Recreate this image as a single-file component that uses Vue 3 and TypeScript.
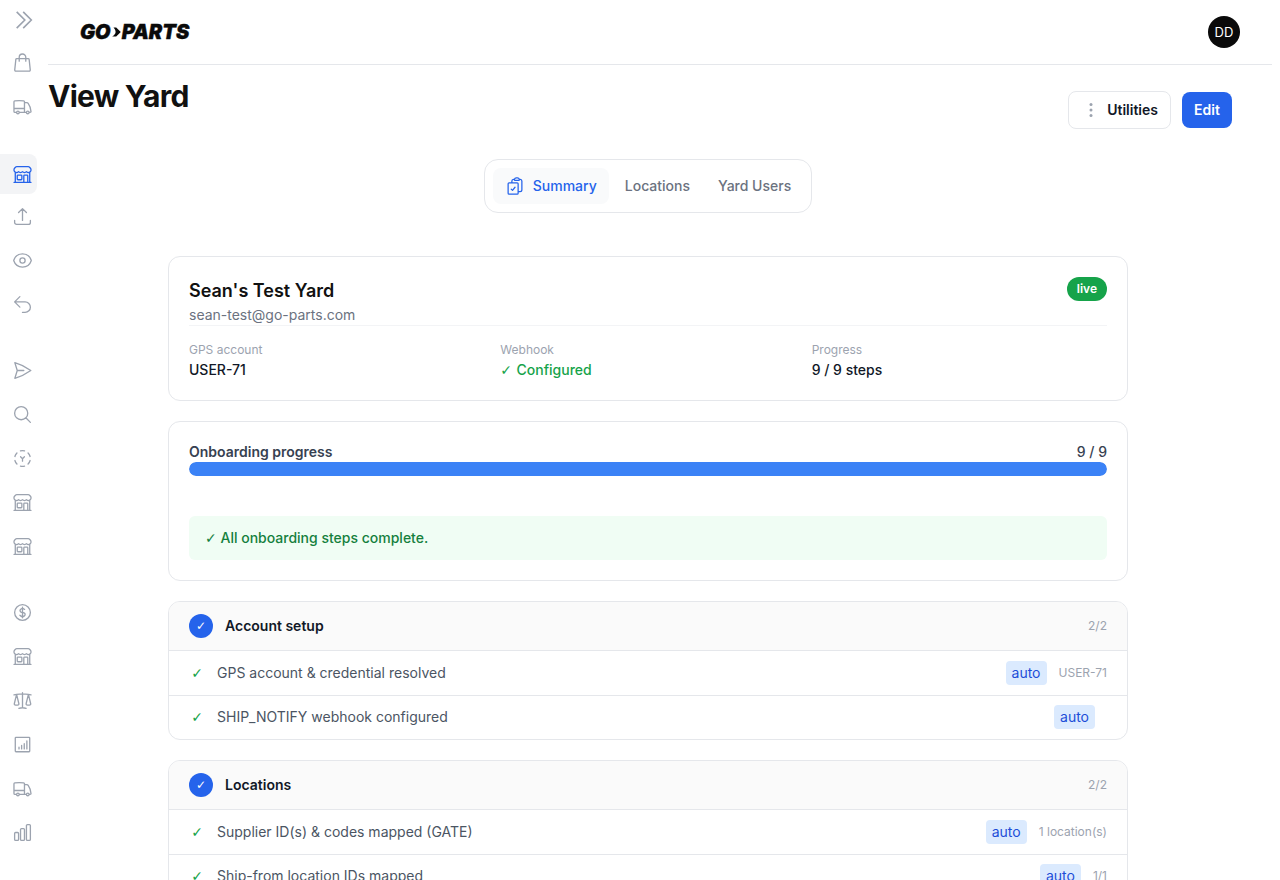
<script setup lang="ts">
type NavItem = { id: string; d: string; gap?: boolean; active?: boolean }
type Step = { label: string; tag: string; meta: string }
type Section = { title: string; count: string; steps: Step[] }

const store =
  'M13.5 21v-7.5a.75.75 0 0 1 .75-.75h3a.75.75 0 0 1 .75.75V21m-4.5 0H2.36m11.14 0H18m0 0h3.64m-1.39 0V9.349M3.75 21V9.349m0 0a3.001 3.001 0 0 0 3.75-.615A2.993 2.993 0 0 0 9.75 9.75c.896 0 1.7-.393 2.25-1.016a2.993 2.993 0 0 0 2.25 1.016c.896 0 1.7-.393 2.25-1.016a3.001 3.001 0 0 0 3.75.614m-16.5 0a3.004 3.004 0 0 1-.621-4.72l1.189-1.19A1.5 1.5 0 0 1 5.378 3h13.243a1.5 1.5 0 0 1 1.06.44l1.19 1.189a3 3 0 0 1-.621 4.72M6.75 18h3.75a.75.75 0 0 0 .75-.75V13.5a.75.75 0 0 0-.75-.75H6.75a.75.75 0 0 0-.75.75v3.75c0 .414.336.75.75.75Z'
const truck =
  'M8.25 18.75a1.5 1.5 0 0 1-3 0m3 0a1.5 1.5 0 0 0-3 0m3 0h6m-9 0H3.375a1.125 1.125 0 0 1-1.125-1.125V14.25m17.25 4.5a1.5 1.5 0 0 1-3 0m3 0a1.5 1.5 0 0 0-3 0m3 0h1.125c.621 0 1.129-.504 1.09-1.124a17.902 17.902 0 0 0-3.213-9.193 2.056 2.056 0 0 0-1.58-.86H14.25M16.5 18.75h-2.25m0-11.177v-.958c0-.568-.422-1.048-.987-1.106a48.554 48.554 0 0 0-10.026 0 1.106 1.106 0 0 0-.987 1.106v7.635m12-6.677v6.677m0 4.5v-4.5m0 0h-12'

const navItems: NavItem[] = [
  { id: 'bag', d: 'M15.75 10.5V6a3.75 3.75 0 1 0-7.5 0v4.5m11.356-1.993 1.263 12c.07.665-.45 1.243-1.119 1.243H4.25a1.125 1.125 0 0 1-1.12-1.243l1.264-12A1.125 1.125 0 0 1 5.513 7.5h12.974c.576 0 1.059.435 1.119 1.007Z' },
  { id: 'truck', d: truck },
  { id: 'yards', d: store, gap: true, active: true },
  { id: 'upload', d: 'M3 16.5v2.25A2.25 2.25 0 0 0 5.25 21h13.5A2.25 2.25 0 0 0 21 18.75V16.5m-13.5-9L12 3m0 0 4.5 4.5M12 3v13.5' },
  { id: 'eye', d: 'M2.036 12.322a1.012 1.012 0 0 1 0-.639C3.423 7.51 7.36 4.5 12 4.5c4.638 0 8.573 3.007 9.963 7.178.07.207.07.431 0 .639C20.577 16.49 16.64 19.5 12 19.5c-4.638 0-8.573-3.007-9.963-7.178ZM15 12a3 3 0 1 1-6 0 3 3 0 0 1 6 0Z' },
  { id: 'return', d: 'M9 15 3 9m0 0 6-6M3 9h12a6 6 0 0 1 0 12h-3' },
  { id: 'send', d: 'M6 12 3.269 3.125A59.769 59.769 0 0 1 21.485 12 59.768 59.768 0 0 1 3.27 20.875L5.999 12Zm0 0h7.5', gap: true },
  { id: 'search', d: 'm21 21-5.197-5.197m0 0A7.5 7.5 0 1 0 5.196 5.196a7.5 7.5 0 0 0 10.607 10.607Z' },
  { id: 'scan', d: 'M9.67 3.31A9 9 0 0 1 14.33 3.31M18.36 5.64A9 9 0 0 1 20.69 9.67M20.69 14.33A9 9 0 0 1 18.36 18.36M14.33 20.69A9 9 0 0 1 9.67 20.69M5.64 18.36A9 9 0 0 1 3.31 14.33M3.31 9.67A9 9 0 0 1 5.64 5.64M9.8 10l2.2 2.2 2.2-2.2M12 12.2V15' },
  { id: 'store2', d: store },
  { id: 'store3', d: store },
  { id: 'money', d: 'M12 6v12m-3-2.818.879.659c1.171.879 3.07.879 4.242 0 1.172-.879 1.172-2.303 0-3.182C13.536 12.219 12.768 12 12 12c-.725 0-1.45-.22-2.003-.659-1.106-.879-1.106-2.303 0-3.182s2.9-.879 4.006 0l.415.33M21 12a9 9 0 1 1-18 0 9 9 0 0 1 18 0Z', gap: true },
  { id: 'store4', d: store },
  { id: 'scale', d: 'M12 3v17.25m0 0c-1.472 0-2.882.265-4.185.75M12 20.25c1.472 0 2.882.265 4.185.75M18.75 4.97A48.416 48.416 0 0 0 12 4.5c-2.291 0-4.545.16-6.75.47m13.5 0c1.01.143 2.01.317 3 .52m-3-.52 2.62 10.726c.122.499-.106 1.028-.589 1.202a5.988 5.988 0 0 1-2.031.352 5.988 5.988 0 0 1-2.031-.352c-.483-.174-.711-.703-.59-1.202L18.75 4.971Zm-16.5.52c.99-.203 1.99-.377 3-.52m0 0 2.62 10.726c.122.499-.106 1.028-.589 1.202a5.989 5.989 0 0 1-2.031.352 5.989 5.989 0 0 1-2.031-.352c-.483-.174-.711-.703-.59-1.202L5.25 4.971Z' },
  { id: 'report', d: 'M3.75 4.5a.75.75 0 0 1 .75-.75h15a.75.75 0 0 1 .75.75v15a.75.75 0 0 1-.75.75h-15a.75.75 0 0 1-.75-.75ZM8 17v-2M11 17v-4M14 17v-6M17 17V8' },
  { id: 'truck2', d: truck },
  { id: 'chart', d: 'M3 13.125C3 12.504 3.504 12 4.125 12h2.25c.621 0 1.125.504 1.125 1.125v6.75C7.5 20.496 6.996 21 6.375 21h-2.25A1.125 1.125 0 0 1 3 19.875v-6.75ZM9.75 8.625c0-.621.504-1.125 1.125-1.125h2.25c.621 0 1.125.504 1.125 1.125v11.25c0 .621-.504 1.125-1.125 1.125h-2.25a1.125 1.125 0 0 1-1.125-1.125V8.625ZM16.5 4.125c0-.621.504-1.125 1.125-1.125h2.25C20.496 3 21 3.504 21 4.125v15.75c0 .621-.504 1.125-1.125 1.125h-2.25a1.125 1.125 0 0 1-1.125-1.125V4.125Z' },
]

const summaryIcon =
  'M11.35 3.836c-.065.21-.1.433-.1.664 0 .414.336.75.75.75h4.5a.75.75 0 0 0 .75-.75 2.25 2.25 0 0 0-.1-.664m-5.8 0A2.251 2.251 0 0 1 13.5 2.25H15c1.012 0 1.867.668 2.15 1.586m-5.8 0c-.376.023-.75.05-1.124.08C9.095 4.01 8.25 4.973 8.25 6.108V8.25m8.9-4.414c.376.023.75.05 1.124.08 1.131.094 1.976 1.057 1.976 2.192V16.5A2.25 2.25 0 0 1 18 18.75h-2.25m-7.5-10.5H4.875c-.621 0-1.125.504-1.125 1.125v11.25c0 .621.504 1.125 1.125 1.125h9.75c.621 0 1.125-.504 1.125-1.125V18.75m-7.5-10.5h6.375c.621 0 1.125.504 1.125 1.125v9.375m-8.25-3 1.5 1.5 3-3.75'

const details = [
  { label: 'GPS account', value: 'USER-71', ok: false },
  { label: 'Webhook', value: 'Configured', ok: true },
  { label: 'Progress', value: '9 / 9 steps', ok: false },
]

const sections: Section[] = [
  {
    title: 'Account setup',
    count: '2/2',
    steps: [
      { label: 'GPS account & credential resolved', tag: 'auto', meta: 'USER-71' },
      { label: 'SHIP_NOTIFY webhook configured', tag: 'auto', meta: '' },
    ],
  },
  {
    title: 'Locations',
    count: '2/2',
    steps: [
      { label: 'Supplier ID(s) & codes mapped (GATE)', tag: 'auto', meta: '1 location(s)' },
      { label: 'Ship-from location IDs mapped', tag: 'auto', meta: '1/1' },
    ],
  },
]
</script>

<template>
  <div class="shell">
    <nav class="rail">
      <button class="rail-toggle" type="button" aria-label="Expand">
        <svg class="toggle-icon" viewBox="0 0 24 24"><path d="m5.25 4.5 7.5 7.5-7.5 7.5m6-15 7.5 7.5-7.5 7.5" /></svg>
      </button>
      <a
        v-for="item in navItems"
        :key="item.id"
        class="rail-item"
        :class="{ 'rail-gap': item.gap, active: item.active }"
      >
        <svg viewBox="0 0 24 24"><path :d="item.d" /></svg>
      </a>
    </nav>

    <main class="main">
      <header class="topbar">
        <div class="logo">
          <span>GO</span>
          <svg viewBox="0 0 10 12"><path d="M2.5 1.5H5.2L9.8 6 5.2 10.5H1.2C3.4 9 4.6 7.5 4.6 6S4 3 2.5 1.5Z" /></svg>
          <span>PARTS</span>
        </div>
        <div class="avatar">DD</div>
      </header>

      <div class="page">
        <div class="page-head">
          <h1>View Yard</h1>
          <div class="actions">
            <button class="btn-utilities" type="button">
              <svg viewBox="0 0 4 16"><circle cx="2" cy="2.5" r="1.5" /><circle cx="2" cy="8" r="1.5" /><circle cx="2" cy="13.5" r="1.5" /></svg>
              Utilities
            </button>
            <button class="btn-edit" type="button">Edit</button>
          </div>
        </div>

        <div class="tabs-wrap">
          <div class="tabs">
            <button class="tab tab-active" type="button">
              <svg viewBox="0 0 24 24"><path :d="summaryIcon" /></svg>
              Summary
            </button>
            <button class="tab" type="button">Locations</button>
            <button class="tab" type="button">Yard Users</button>
          </div>
        </div>

        <div class="content">
          <section class="card">
            <div class="yard-head">
              <div>
                <h2>Sean's Test Yard</h2>
                <div class="email">sean-test@go-parts.com</div>
              </div>
              <span class="badge">live</span>
            </div>
            <div class="details">
              <div v-for="d in details" :key="d.label">
                <div class="detail-label">{{ d.label }}</div>
                <div class="detail-value" :class="{ ok: d.ok }"><span v-if="d.ok" class="tick">✓ </span>{{ d.value }}</div>
              </div>
            </div>
          </section>

          <section class="card">
            <div class="progress-head">
              <span class="progress-title">Onboarding progress</span>
              <span>9 / 9</span>
            </div>
            <div class="bar"><div class="bar-fill" :style="{ width: '100%' }"></div></div>
            <div class="complete"><span class="tick">✓</span> All onboarding steps complete.</div>
          </section>

          <section v-for="s in sections" :key="s.title" class="steps">
            <div class="steps-head">
              <span class="steps-dot tick">✓</span>
              <span class="steps-title">{{ s.title }}</span>
              <span class="steps-count">{{ s.count }}</span>
            </div>
            <div v-for="step in s.steps" :key="step.label" class="step">
              <span class="step-check tick">✓</span>
              <span class="step-label">{{ step.label }}</span>
              <span class="tag">{{ step.tag }}</span>
              <span class="step-meta">{{ step.meta }}</span>
            </div>
          </section>
        </div>
      </div>
    </main>
  </div>
</template>

<style>
html, body {
  margin: 0;
  background: #fff;
}
</style>

<style scoped>
.shell {
  display: flex;
  height: 100vh;
  overflow: hidden;
  font-family: Inter, "Liberation Sans", sans-serif;
  color: #111827;
}

.tick {
  font-family: "DejaVu Sans", sans-serif;
  font-weight: 400;
}

.rail {
  width: 48px;
  flex: none;
  display: flex;
  flex-direction: column;
  align-items: flex-start;
}

.rail-toggle {
  width: 37px;
  height: 40px;
  padding: 0;
  border: 0;
  background: none;
  display: flex;
  align-items: center;
  justify-content: center;
}

.toggle-icon {
  width: 26px;
  height: 26px;
  margin-left: 10px;
  fill: none;
  stroke: #9ca3af;
  stroke-width: 1.5;
}

.rail-item {
  width: 37px;
  height: 44px;
  display: flex;
  align-items: center;
  justify-content: center;
  padding-left: 8px;
  box-sizing: border-box;
}

.rail-item svg {
  width: 21px;
  height: 21px;
  fill: none;
  stroke: #9ca3af;
  stroke-width: 1.5;
  stroke-linecap: round;
  stroke-linejoin: round;
}

.rail-gap {
  margin-top: 22px;
}

.rail-item.active {
  height: 40px;
  margin-top: 26px;
  background: #f3f4f6;
  border-radius: 0 8px 8px 0;
}

.rail-item.active svg {
  stroke: #2563eb;
}

.main {
  width: 1224px;
  height: 100vh;
  flex: none;
  overflow-y: auto;
  scrollbar-width: none;
}

.topbar {
  height: 64px;
  border-bottom: 1px solid #e5e7eb;
  padding: 0 32px;
  display: flex;
  align-items: center;
  justify-content: space-between;
}

.logo {
  display: flex;
  align-items: center;
  font-size: 20px;
  font-weight: 900;
  font-style: italic;
  letter-spacing: 0;
  -webkit-text-stroke: 0.4px #0a0a0a;
  color: #0a0a0a;
  line-height: 1;
}

.logo svg {
  width: 10px;
  height: 12px;
  margin: 0 1px 0 0;
  fill: #0a0a0a;
}

.avatar {
  width: 32px;
  height: 32px;
  border-radius: 50%;
  background: #0a0a0a;
  color: #fff;
  font-size: 13px;
  line-height: 20px;
  display: flex;
  align-items: center;
  justify-content: center;
}

.page {
  width: 1200px;
}

.page-head {
  display: flex;
  justify-content: space-between;
  align-items: flex-start;
  padding-top: 13px;
}

h1 {
  margin: 0;
  font-size: 30px;
  line-height: 36px;
  font-weight: 700;
  letter-spacing: -0.75px;
  color: #111;
}

.actions {
  display: flex;
  align-items: center;
  gap: 11px;
  margin-top: 13px;
  padding-right: 16px;
}

.btn-utilities {
  height: 38px;
  padding: 0 12px 0 20px;
  display: flex;
  align-items: center;
  gap: 14px;
  background: #fff;
  border: 1px solid #e5e7eb;
  border-radius: 8px;
  font: 600 14px/20px Inter, sans-serif;
  color: #111827;
}

.btn-utilities svg {
  width: 4px;
  height: 16px;
  fill: #9ca3af;
}

.btn-edit {
  height: 36px;
  width: 50px;
  padding: 0;
  border: 0;
  border-radius: 8px;
  background: #2563eb;
  color: #fff;
  font: 600 14px/20px Inter, sans-serif;
}

.tabs-wrap {
  display: flex;
  justify-content: center;
  margin-top: 30px;
}

.tabs {
  display: flex;
  gap: 4px;
  padding: 8px;
  background: #fff;
  border: 1px solid #e5e7eb;
  border-radius: 14px;
}

.tab {
  height: 36px;
  padding: 0 12px;
  display: flex;
  align-items: center;
  gap: 8px;
  border: 0;
  background: none;
  border-radius: 8px;
  font: 500 14px/20px Inter, sans-serif;
  color: #6b7280;
}

.tab svg {
  width: 20px;
  height: 20px;
  fill: none;
  stroke: #2563eb;
  stroke-width: 1.5;
  stroke-linecap: round;
  stroke-linejoin: round;
}

.tab-active {
  background: #f9fafb;
  color: #2563eb;
}

.content {
  width: 960px;
  margin: 43px auto 0;
  display: flex;
  flex-direction: column;
  gap: 20px;
  padding-bottom: 24px;
}

.card {
  border: 1px solid #e5e7eb;
  border-radius: 12px;
  padding: 20px;
  background: #fff;
}

.yard-head {
  display: flex;
  justify-content: space-between;
  align-items: flex-start;
  border-bottom: 1px solid #f3f4f6;
}

h2 {
  margin: 0;
  font-size: 18px;
  line-height: 28px;
  font-weight: 600;
  color: #111;
}

.email {
  font-size: 14px;
  line-height: 20px;
  color: #6b7280;
}

.badge {
  height: 24px;
  padding: 0 10px;
  display: flex;
  align-items: center;
  border-radius: 999px;
  background: #16a34a;
  color: #fff;
  font-size: 12px;
  line-height: 16px;
  font-weight: 600;
}

.details {
  display: grid;
  grid-template-columns: repeat(3, 1fr);
  gap: 16px;
  margin-top: 16px;
}

.detail-label {
  font-size: 12px;
  line-height: 16px;
  color: #9ca3af;
}

.detail-value {
  margin-top: 2px;
  font-size: 14px;
  line-height: 20px;
  font-weight: 500;
  color: #111827;
}

.detail-value.ok {
  color: #16a34a;
}

.progress-head {
  display: flex;
  justify-content: space-between;
  font-size: 14px;
  line-height: 20px;
  font-weight: 500;
  color: #374151;
}

.progress-title {
  font-weight: 600;
}

.bar {
  height: 14px;
  border-radius: 999px;
  background: #e5e7eb;
  overflow: hidden;
}

.bar-fill {
  height: 100%;
  background: #3b82f6;
  border-radius: 999px;
}

.complete {
  margin-top: 40px;
  padding: 12px 16px;
  border-radius: 6px;
  background: #f0fdf4;
  color: #15803d;
  font-size: 14px;
  line-height: 20px;
  font-weight: 500;
}

.steps {
  border: 1px solid #e5e7eb;
  border-radius: 12px;
  overflow: hidden;
  background: #fff;
}

.steps-head {
  height: 48px;
  padding: 0 20px;
  display: flex;
  align-items: center;
  gap: 12px;
  background: #fafafa;
  border-bottom: 1px solid #e5e7eb;
}

.steps-dot {
  width: 24px;
  height: 24px;
  border-radius: 50%;
  background: #2563eb;
  color: #fff;
  font-size: 12px;
  line-height: 16px;
  display: flex;
  align-items: center;
  justify-content: center;
}

.steps-title {
  flex: 1;
  font-size: 14px;
  line-height: 20px;
  font-weight: 600;
  color: #111827;
}

.steps-count {
  font-size: 12px;
  line-height: 16px;
  color: #9ca3af;
}

.step {
  height: 43.5px;
  padding: 0 20px;
  display: flex;
  align-items: center;
  gap: 12px;
  border-bottom: 1px solid #e5e7eb;
}

.step:last-child {
  border-bottom: 0;
}

.step-check {
  width: 16px;
  text-align: center;
  font-size: 14px;
  line-height: 20px;
  color: #16a34a;
}

.step-label {
  flex: 1;
  font-size: 14px;
  line-height: 20px;
  color: #4b5563;
}

.tag {
  height: 24px;
  padding: 0 6px;
  display: flex;
  align-items: center;
  border-radius: 4px;
  background: #dbeafe;
  color: #1d4ed8;
  font-size: 14px;
  line-height: 20px;
}

.step-meta {
  font-size: 12px;
  line-height: 16px;
  color: #9ca3af;
}
</style>
